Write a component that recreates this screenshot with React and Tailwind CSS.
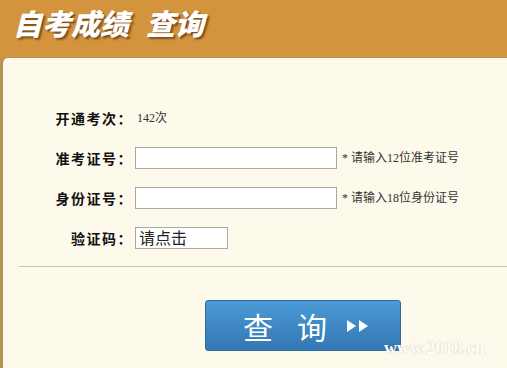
import React from "react";

const rows = [
  { label: "开通考次：", value: "142次" },
  { label: "准考证号：", input: true, hint: "* 请输入12位准考证号" },
  { label: "身份证号：", input: true, hint: "* 请输入18位身份证号" },
  { label: "验证码：", captcha: true },
];

const cjk = { fontFamily: '"Noto Sans CJK SC", sans-serif' };

const App = () => {
  return (
    <div
      className="relative w-[507px] h-[368px] overflow-hidden bg-[#d3943d]"
      style={{ fontFamily: '"Liberation Serif", "Noto Sans CJK SC", serif' }}
    >
      <div className="h-[57px] flex items-center pl-[13px] pb-[12px]">
        <h1
          className="flex gap-[17px] text-white text-[29px] leading-none font-black italic [text-shadow:2px_2px_2px_rgba(90,50,10,0.7)]"
          style={cjk}
        >
          <span>自考成绩</span>
          <span>查询</span>
        </h1>
      </div>

      <div className="h-[311px] bg-[#fdfaec] border-t border-l-[3px] border-[#b8915a] rounded-tl-[7px] pt-[40px]">
        {rows.map((row) => (
          <div key={row.label} className="flex items-center h-[40px]">
            <div
              className="w-[130px] text-right text-[14px] font-bold tracking-[1.5px] text-[#111]"
              style={cjk}
            >
              {row.label}
            </div>
            <div className="ml-[2px] flex items-center">
              {row.value && (
                <span className="ml-[2px] text-[12px] text-[#333]">{row.value}</span>
              )}
              {row.input && (
                <>
                  <div className="w-[202px] h-[22px] bg-white border border-[#a8a8a8]" />
                  <span className="ml-[5px] text-[12px] text-[#333]">
                    {row.hint}
                  </span>
                </>
              )}
              {row.captcha && (
                <div
                  className="w-[93px] h-[22px] bg-white border border-[#a8a8a8] text-[16px] leading-[19px] pl-[3px] text-[#222]"
                  style={cjk}
                >
                  请点击
                </div>
              )}
            </div>
          </div>
        ))}

        <div className="ml-[16px] mt-[8px] h-px bg-[#c9c39c]" />

        <div className="mt-[33px] ml-[202px] w-[196px] h-[51px] rounded-[3px] border border-[#2f6a99] bg-gradient-to-b from-[#4b9bd6] to-[#3377b4] flex items-center pl-[37px] text-white">
          <span className="text-[30px] leading-none" style={cjk}>
            查
          </span>
          <span className="ml-[24px] text-[30px] leading-none" style={cjk}>
            询
          </span>
          <svg width="24" height="14" viewBox="0 0 24 14" className="ml-[19px]">
            <polygon points="1,1 10,7 1,13" fill="white" />
            <polygon points="13,1 22,7 13,13" fill="white" />
          </svg>
        </div>
      </div>

      <div
        className="absolute left-[384px] top-[335px] text-[18px] font-bold text-white [text-shadow:0_0_1px_rgba(120,100,60,0.5)]"
        style={{ fontFamily: '"Liberation Serif", serif' }}
      >
        www.2018.cn
      </div>
    </div>
  );
};

export default App;
